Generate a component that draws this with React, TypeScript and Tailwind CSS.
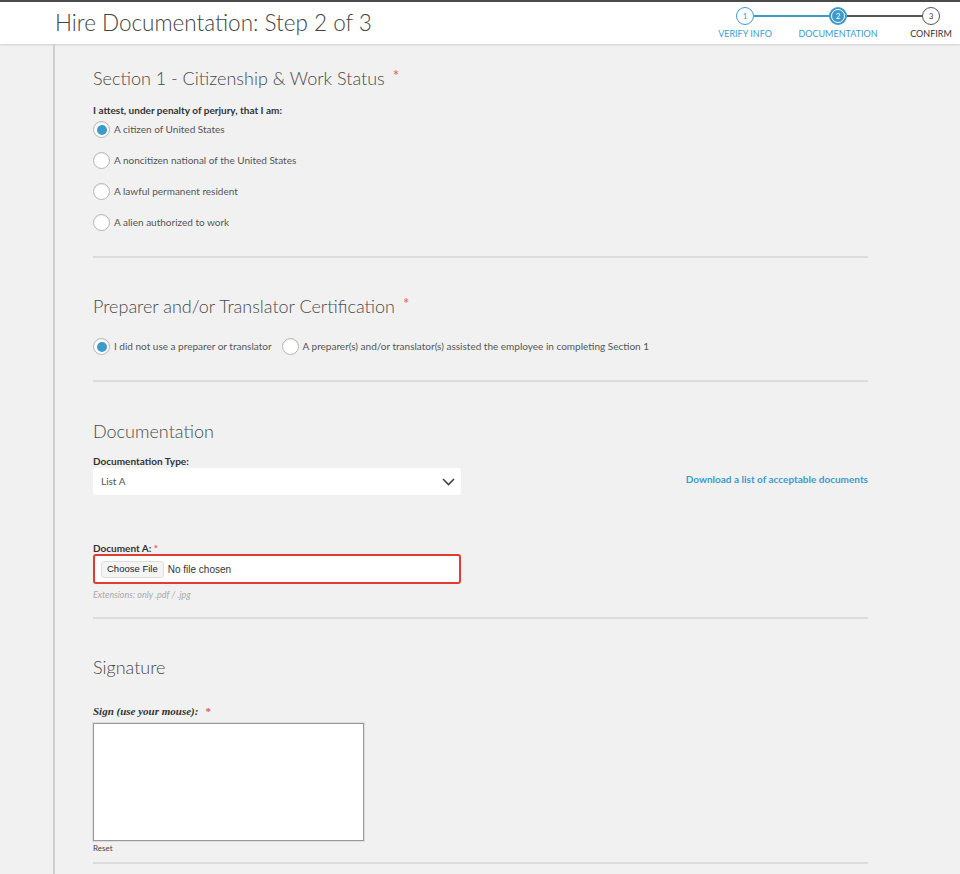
import React from 'react'

const CITIZEN_OPTIONS = [
  'A citizen of United States',
  'A noncitizen national of the United States',
  'A lawful permanent resident',
  'A alien authorized to work',
]

function Radio({ checked }: { checked?: boolean }) {
  return (
    <span className="flex h-[17px] w-[17px] shrink-0 items-center justify-center rounded-full border border-[#b5b5b5] bg-white shadow-[inset_0_1px_1px_rgba(0,0,0,0.08)]">
      {checked && <span className="h-[10px] w-[10px] rounded-full bg-[#3d9bc9]" />}
    </span>
  )
}

function Stepper() {
  return (
    <div className="relative h-[44px] w-[240px]">
      {/* connecting lines */}
      <div className="absolute left-[34px] top-[14px] h-[2px] w-[85px] bg-[#3d9bc9]" />
      <div className="absolute left-[127px] top-[14px] h-[2px] w-[85px] bg-[#555]" />
      {[
        { n: 1, label: 'VERIFY INFO', x: 25, state: 'done' },
        { n: 2, label: 'DOCUMENTATION', x: 118, state: 'active' },
        { n: 3, label: 'CONFIRM', x: 211, state: 'todo' },
      ].map((s) => (
        <div key={s.n} className="absolute top-[6px] flex w-0 flex-col items-center" style={{ left: s.x }}>
          {s.state === 'active' ? (
            <span className="flex h-[18px] w-[18px] shrink-0 items-center justify-center rounded-full bg-[#3d9bc9]">
              <span className="flex h-[14px] w-[14px] items-center justify-center rounded-full border border-white text-[8px] leading-none text-white">
                {s.n}
              </span>
            </span>
          ) : (
            <span
              className={`flex h-[18px] w-[18px] shrink-0 items-center justify-center rounded-full border-[1.5px] bg-white text-[8px] leading-none ${
                s.state === 'done' ? 'border-[#3d9bc9] text-[#3d9bc9]' : 'border-[#555] text-[#444]'
              }`}
            >
              {s.n}
            </span>
          )}
          <span
            className={`mt-[4px] whitespace-nowrap text-[9px] leading-none ${
              s.state === 'todo' ? 'text-[#333]' : 'text-[#3d9bc9]'
            }`}
          >
            {s.label}
          </span>
        </div>
      ))}
    </div>
  )
}

function SectionTitle({ children, required }: { children: React.ReactNode; required?: boolean }) {
  return (
    <h2 className="flex items-start text-[18px] font-light leading-[22px] text-[#4a4a4a]">
      {children}
      {required && <span className="ml-[8px] mt-[-3px] text-[15px] font-normal text-[#e05a4f]">*</span>}
    </h2>
  )
}

function Divider() {
  return <div className="h-[2px] w-full bg-[#dcdcdc]" />
}

export default function App() {
  return (
    <div className="min-h-[874px] bg-[#f1f1f1] font-['Lato','Noto_Sans',sans-serif] text-[#555]">
      {/* Header */}
      <header className="flex h-[44px] items-center justify-between border-t-2 border-[#4a4a4a] bg-white shadow-[0_1px_2px_rgba(0,0,0,0.15)]">
        <h1 className="pl-[55px] text-[22.5px] font-light leading-none text-[#444]">Hire Documentation: Step 2 of 3</h1>
        <Stepper />
      </header>

      <div className="ml-[53px] min-h-[830px] border-l-2 border-[#cfcfcf] pl-[38px]">
        <div className="w-[775px] pt-[23px]">
          {/* Section 1 */}
          <SectionTitle required>Section 1 - Citizenship &amp; Work Status</SectionTitle>
          <p className="mt-[14px] text-[10px] font-bold leading-[14px] text-[#333]">
            I attest, under penalty of perjury, that I am:
          </p>
          <div className="mt-[4px] flex flex-col gap-[14px]">
            {CITIZEN_OPTIONS.map((o, i) => (
              <label key={o} className="flex items-center gap-[4px] text-[10px] leading-[17px] text-[#555]">
                <Radio checked={i === 0} />
                {o}
              </label>
            ))}
          </div>
          <div className="mt-[25px]">
            <Divider />
          </div>

          {/* Preparer */}
          <div className="pt-[37px]">
            <SectionTitle required>Preparer and/or Translator Certification</SectionTitle>
          </div>
          <div className="mt-[21px] flex items-center text-[10px] leading-[17px] text-[#555]">
            <label className="flex items-center gap-[4px]">
              <Radio checked />
              I did not use a preparer or translator
            </label>
            <label className="ml-[10px] flex items-center gap-[4px]">
              <Radio />
              A preparer(s) and/or translator(s) assisted the employee in completing Section 1
            </label>
          </div>
          <div className="mt-[25px]">
            <Divider />
          </div>

          {/* Documentation */}
          <div className="pt-[38px]">
            <SectionTitle>Documentation</SectionTitle>
          </div>
          <div className="mt-[12px] flex items-end justify-between">
            <div className="w-[368px]">
              <p className="text-[10px] font-bold leading-[14px] text-[#333]">Documentation Type:</p>
              <div className="flex h-[27px] items-center justify-between rounded-[3px] bg-white pl-[8px] pr-[6px] text-[10px] text-[#555]">
                <span>List A</span>
                <svg width="13" height="8" viewBox="0 0 13 8" fill="none" stroke="#444" strokeWidth="1.6">
                  <path d="M1 1l5.5 5.5L12 1" />
                </svg>
              </div>
            </div>
            <a className="mb-[8px] text-[10px] font-bold text-[#3d9bc9]" href="#">
              Download a list of acceptable documents
            </a>
          </div>

          <div className="mt-[47px] w-[368px]">
            <p className="text-[10px] font-bold leading-[12px] text-[#333]">
              Document A: <span className="text-[#e05a4f]">*</span>
            </p>
            <div className="flex h-[30px] items-center gap-[4px] rounded-[3px] border-2 border-[#e53935] bg-white pl-[6px]">
              <span className="flex h-[17px] items-center rounded-[3px] border border-[#ddd] bg-[#f4f4f4] px-[5px] font-['Liberation_Sans',sans-serif] text-[9.5px] text-[#222]">
                Choose File
              </span>
              <span className="font-['Liberation_Sans',sans-serif] text-[10px] text-[#333]">No file chosen</span>
            </div>
            <p className="mt-[4px] text-[9px] italic text-[#aaa]">Extensions: only .pdf / .jpg</p>
          </div>
          <div className="mt-[15px]">
            <Divider />
          </div>

          {/* Signature */}
          <div className="pt-[37px]">
            <SectionTitle>Signature</SectionTitle>
          </div>
          <p className="mt-[26px] font-['Liberation_Serif',serif] text-[11px] font-bold italic leading-[14px] text-[#333]">
            Sign (use your mouse):
            <span className="ml-[7px] not-italic text-[#e05a4f]">*</span>
          </p>
          <div className="mt-[5px] h-[118px] w-[271px] border border-[#999] bg-white shadow-[0_0_0_1px_#ddd]" />
          <p className="mt-[1px] text-[8px] text-[#444]">Reset</p>
          <div className="mt-[8px]">
            <Divider />
          </div>
        </div>
      </div>
    </div>
  )
}
